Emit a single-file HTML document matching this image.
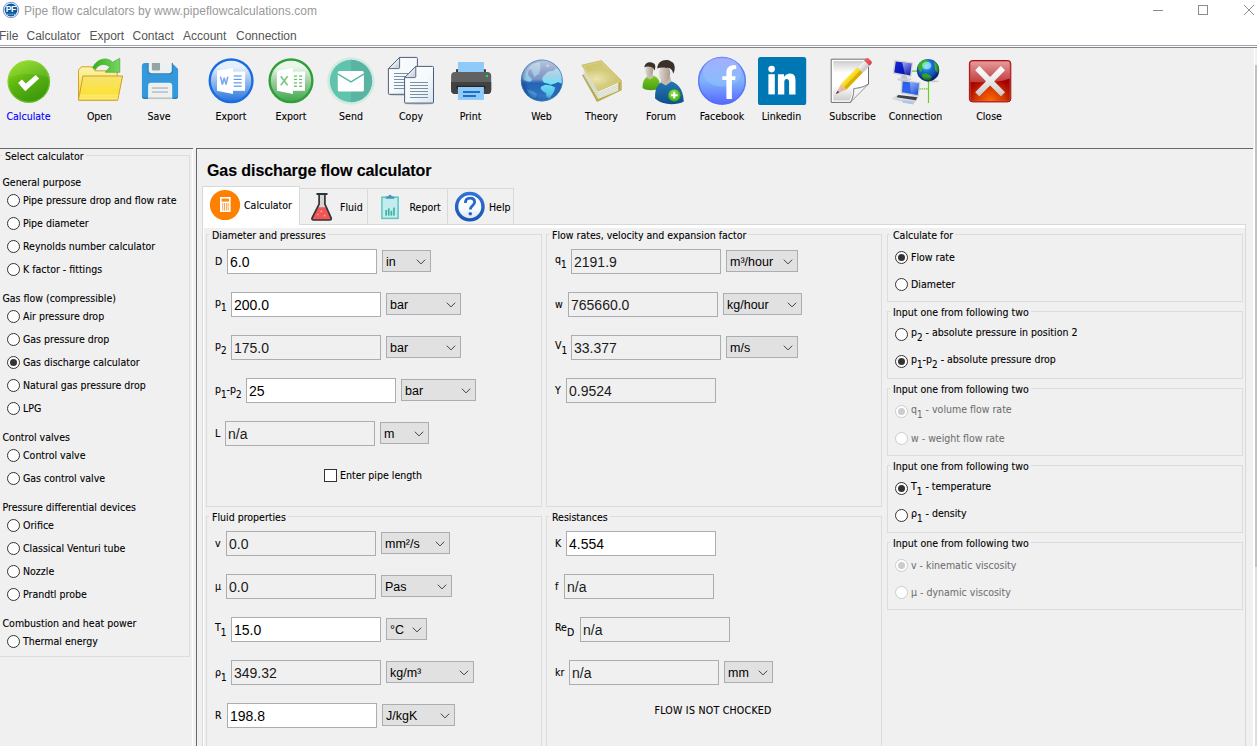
<!DOCTYPE html>
<html lang="en"><head><meta charset="utf-8"><title>Pipe flow calculators by www.pipeflowcalculations.com</title>
<style>
html,body{margin:0;padding:0}
body{width:1257px;height:746px;overflow:hidden;background:#f0f0f0;position:relative;font-family:"DejaVu Sans Condensed","DejaVu Sans","Liberation Sans",sans-serif;font-stretch:condensed;font-size:10.5px;color:#000;line-height:1;-webkit-text-stroke-width:.1px}
.a{position:absolute;white-space:nowrap}
.t{position:absolute;white-space:nowrap;line-height:14px;height:14px}
.titlebar{position:absolute;left:0;top:0;width:1257px;height:45px;background:#fff}
.title{-webkit-text-stroke-width:0;font:12px "Liberation Sans",sans-serif;color:#999;left:24px;top:4px;line-height:14px;letter-spacing:.055px}
.menu{-webkit-text-stroke-width:0;font:12px "Liberation Sans",sans-serif;color:#555;top:29px;line-height:14px}
.tl{position:absolute;top:109px;width:80px;text-align:center;line-height:14px}
.ic{position:absolute}
.inp{-webkit-text-stroke-width:0;position:absolute;box-sizing:border-box;height:25px;width:150px;border:1px solid #abadb3;background:#fff;font:14px "Liberation Sans",sans-serif;line-height:16px;padding:4px 0 0 2px;color:#000;white-space:nowrap}
.inp.d{background:#f0f0f0;color:#1a1a1a}
.sel{-webkit-text-stroke-width:0;position:absolute;box-sizing:border-box;height:22px;border:1px solid #acadb1;background:#e1e1e1;font:12.5px "Liberation Sans",sans-serif;line-height:14px;padding:4px 0 0 3px;white-space:nowrap}
.sel svg{position:absolute;right:4px;top:8px}
.gb{position:absolute;box-sizing:border-box;border:1px solid #dcdcdc}
.gl{position:absolute;background:#f0f0f0;line-height:14px;height:12px;padding:0 2px 0 3px;white-space:nowrap}
.gl span{position:relative;top:0}
.rd{position:absolute;width:13px;height:13px;box-sizing:border-box;border:1px solid #333;border-radius:50%;background:#fff}
.rd.on::after{content:"";position:absolute;left:2px;top:2px;width:7px;height:7px;border-radius:50%;background:#333}
.rd.dis{border-color:#cccccc;background:#fff}
.rd.dis.on::after{background:#cccccc}
.gray{color:#6f6f6f;-webkit-text-stroke-width:.05px}
sub{font-size:9.8px;vertical-align:baseline;position:relative;top:5px;line-height:0}
</style></head>
<body>
<div class="titlebar"></div>
<div class="ic" style="left:3px;top:2px;width:16px;height:16px"><svg width="18" height="18" viewBox="2 1 18 18" style="position:absolute;left:-1px;top:-1px"><circle cx="11" cy="10" r="7.7" fill="#fff" stroke="#6c80d2" stroke-width=".9"/><circle cx="11" cy="10" r="6.4" fill="#0b5a9e"/><text x="10.8" y="12.4" text-anchor="middle" font-family="Liberation Sans, sans-serif" font-weight="bold" font-size="8.6" fill="#fff" letter-spacing="-.5">PF</text><path d="M6.8 14.2H15.2" stroke="#fff" stroke-width=".8" stroke-dasharray="1 .8"/></svg></div>
<div class="a title">Pipe flow calculators by www.pipeflowcalculations.com</div>
<svg class="ic" style="left:1140px;top:0" width="117" height="24" viewBox="0 0 117 24"><g stroke="#8c8c8c" stroke-width="1" fill="none"><path d="M13 10.5h10"/><rect x="58.5" y="5.5" width="9" height="9"/><path d="M104 5l10 10M114 5l-10 10"/></g></svg>
<div class="a menu" style="left:-1px">File</div>
<div class="a menu" style="left:26.5px">Calculator</div>
<div class="a menu" style="left:89.5px">Export</div>
<div class="a menu" style="left:132.5px">Contact</div>
<div class="a menu" style="left:183px">Account</div>
<div class="a menu" style="left:236px">Connection</div>
<div class="a" style="left:0;top:45px;width:1257px;height:1px;background:#a0a0a0"></div>
<div class="a" style="left:0;top:46px;width:1257px;height:1px;background:#fff"></div>
<div class="a" style="left:0;top:47px;width:1257px;height:1px;background:#7d828c"></div>
<div class="ic" style="left:2px;top:55px;width:52px;height:52px"><svg width="52" height="52" viewBox="2 55 52 52"><defs><linearGradient id="gCalc" x1="0.25" y1="0" x2="0.75" y2="1"><stop offset="0" stop-color="#8edb14"/><stop offset=".45" stop-color="#5cb411"/><stop offset="1" stop-color="#36950b"/></linearGradient></defs><circle cx="28.8" cy="81.5" r="21.3" fill="url(#gCalc)"/><circle cx="28.8" cy="81.5" r="20.6" fill="none" stroke="#9be03a" stroke-opacity=".55" stroke-width="1"/><path d="M8.6 78.5A20.4 20.4 0 0 1 49 78.5C42 72.5 15 72.5 8.6 78.5Z" fill="#fff" fill-opacity=".10"/><polygon points="18.1,83 21.9,79.4 25.9,83.5 35.7,75 39.1,78.4 25.3,91.3" fill="#fff"/></svg></div><div class="tl" style="left:-11.5px;color:#0000ff">Calculate</div>
<div class="ic" style="left:73px;top:55px;width:52px;height:52px"><svg width="52" height="52" viewBox="73 55 52 52"><defs><linearGradient id="gOpA" x1="0" y1="0" x2="0" y2="1"><stop offset="0" stop-color="#fdf4a8"/><stop offset="1" stop-color="#f5d840"/></linearGradient><linearGradient id="gOpB" x1="0" y1="0" x2="0" y2="1"><stop offset="0" stop-color="#f6e36f"/><stop offset=".7" stop-color="#fce23a"/><stop offset="1" stop-color="#f7d936"/></linearGradient><linearGradient id="gOpC" x1="0" y1="0" x2="1" y2="0"><stop offset="0" stop-color="#36b018"/><stop offset="1" stop-color="#78d468"/></linearGradient></defs><path d="M78.5 100V70.2L81.3 66.8H92.3L95 70.8H117.2V77" fill="url(#gOpA)" stroke="#d1a032" stroke-width="1" stroke-linejoin="round"/><path d="M82.9 76H122.6L117.7 100.3H78.5Z" fill="url(#gOpB)" stroke="#cf9c2e" stroke-width="1" stroke-linejoin="round"/><path d="M79.6 95.2H118.4M79.3 97H118M79 98.7H117.8" stroke="#fdf1a0" stroke-width=".8" fill="none"/><path d="M92.8 67.6C96 59.5 106.5 55.8 112.6 62.2L119.8 58.2V72.3H105.4L109.6 67.2C106.5 63.2 98.5 63.4 95.6 69.6Z" fill="url(#gOpC)" stroke="#3aa61f" stroke-width=".6"/></svg></div><div class="tl" style="left:59.5px">Open</div>
<div class="ic" style="left:133px;top:55px;width:52px;height:52px"><svg width="52" height="52" viewBox="133 55 52 52"><path d="M145 62.9H172L178.1 69V96.1Q178.1 99.1 175.1 99.1H145Q141.9 99.1 141.9 96.1V66Q141.9 62.9 145 62.9Z" fill="#3498db"/><path d="M141.9 95.6V96.1Q141.9 99.1 145 99.1H175.1Q178.1 99.1 178.1 96.1V95.6Q178.1 97.4 175.1 97.4H145Q141.9 97.4 141.9 95.6Z" fill="#2980b9"/><path d="M147.6 62.9H172.9V71.2Q172.9 74.2 169.9 74.2H150.6Q147.6 74.2 147.6 71.2Z" fill="#2980b9"/><path d="M148.7 62.9H171.8V70.2Q171.8 73.2 168.8 73.2H151.7Q148.7 73.2 148.7 70.2Z" fill="#ecf0f1"/><path d="M151.9 62.9H160V69.2Q160 70.6 158.6 70.6H153.3Q151.9 70.6 151.9 69.2Z" fill="#95a5a6"/><path d="M148.1 99.1V85.8Q148.1 82.8 151.1 82.8H169.2Q172.2 82.8 172.2 85.8V99.1Z" fill="#ecf0f1"/><rect x="148.1" y="97.4" width="24.1" height="1.7" fill="#bdc3c7"/><rect x="151.9" y="87.2" width="16.1" height="1.7" fill="#bdc3c7"/><rect x="151.9" y="91.2" width="16.1" height="1.7" fill="#bdc3c7"/></svg></div><div class="tl" style="left:119px">Save</div>
<div class="ic" style="left:205px;top:55px;width:52px;height:52px"><svg width="52" height="52" viewBox="205 55 52 52"><defs><linearGradient id="gWord" x1="0" y1="0" x2="0" y2="1"><stop offset="0" stop-color="#e4effc"/><stop offset=".18" stop-color="#e4effc"/><stop offset=".55" stop-color="#8db6ee"/><stop offset="1" stop-color="#2471de"/></linearGradient></defs><circle cx="231.1" cy="80.8" r="21.35" fill="url(#gWord)" stroke="#1a6de0" stroke-width="2.4"/><path d="M233.0 71.6H245.1V90.8H233.0Z" fill="#fff"/><path d="M217.0 70.4L233.0 68V93.9L217.0 90.8Z" fill="#fff"/><path d="M220.5 76.6L222.4 84.6L224.2 77.6L226.0 84.6L227.79999999999998 76.6" fill="none" stroke="#7aacec" stroke-width="1.6" stroke-linejoin="miter"/><rect x="233.7" y="75.4" width="8" height="1.2" fill="#5a9cec"/><rect x="233.7" y="78.8" width="8" height="1.2" fill="#5a9cec"/><rect x="233.7" y="82.2" width="8" height="1.2" fill="#5a9cec"/><rect x="233.7" y="85.6" width="8" height="1.2" fill="#5a9cec"/></svg></div><div class="tl" style="left:191px">Export</div>
<div class="ic" style="left:265px;top:55px;width:52px;height:52px"><svg width="52" height="52" viewBox="265 55 52 52"><defs><linearGradient id="gExcel" x1="0" y1="0" x2="0" y2="1"><stop offset="0" stop-color="#e9f6ea"/><stop offset=".18" stop-color="#e9f6ea"/><stop offset=".55" stop-color="#93cc98"/><stop offset="1" stop-color="#3ca649"/></linearGradient></defs><circle cx="291" cy="80.8" r="21.35" fill="url(#gExcel)" stroke="#2f9e3b" stroke-width="2.4"/><path d="M292.9 71.6H305V90.8H292.9Z" fill="#fff"/><path d="M276.9 70.4L292.9 68V93.9L276.9 90.8Z" fill="#fff"/><path d="M280.8 76.2L287.6 85.2M287.6 76.2L280.8 85.2" fill="none" stroke="#7cc684" stroke-width="1.7"/><rect x="293.9" y="75.4" width="3.2" height="1.3" fill="#6cc074"/><rect x="299" y="75.4" width="3.2" height="1.3" fill="#6cc074"/><rect x="293.9" y="78.8" width="3.2" height="1.3" fill="#6cc074"/><rect x="299" y="78.8" width="3.2" height="1.3" fill="#6cc074"/><rect x="293.9" y="82.2" width="3.2" height="1.3" fill="#6cc074"/><rect x="299" y="82.2" width="3.2" height="1.3" fill="#6cc074"/><rect x="293.9" y="85.6" width="3.2" height="1.3" fill="#6cc074"/><rect x="299" y="85.6" width="3.2" height="1.3" fill="#6cc074"/></svg></div><div class="tl" style="left:251px">Export</div>
<div class="ic" style="left:325px;top:55px;width:52px;height:52px"><svg width="52" height="52" viewBox="325 55 52 52"><circle cx="351" cy="81" r="23.8" fill="#d3eae3"/><circle cx="351" cy="81" r="21.2" fill="#60c4ad"/><path d="M351 59.8A21.2 21.2 0 0 1 351 102.2Z" fill="#57b5a1"/><rect x="337.8" y="70.9" width="26.1" height="20.6" rx="1.6" fill="#fff"/><path d="M337.6 73.9L351 81.9L364.1 73.9" fill="none" stroke="#57b9a3" stroke-width="1.3"/></svg></div><div class="tl" style="left:311px">Send</div>
<div class="ic" style="left:385px;top:55px;width:52px;height:52px"><svg width="52" height="52" viewBox="385 55 52 52"><defs><linearGradient id="gCpP" x1="0" y1="0" x2="1" y2="1"><stop offset="0" stop-color="#ffffff"/><stop offset=".55" stop-color="#f4f9fc"/><stop offset="1" stop-color="#d6e6f2"/></linearGradient><linearGradient id="gCpF" x1="1" y1="1" x2="0.3" y2="0.3"><stop offset="0" stop-color="#b9c4d2"/><stop offset="1" stop-color="#ffffff"/></linearGradient></defs><ellipse cx="419" cy="103.6" rx="15" ry="1.3" fill="#000" fill-opacity=".13"/><ellipse cx="403" cy="94.8" rx="15" ry="1.2" fill="#000" fill-opacity=".12"/><path d="M399.59999999999997 57.4H416.4Q417.4 57.4 417.4 58.4V93.3Q417.4 94.3 416.4 94.3H389.4Q388.4 94.3 388.4 93.3V68.6Z" fill="url(#gCpP)" stroke="#4c5d7c" stroke-width="1"/><path d="M399.59999999999997 57.4V67.39999999999999Q399.59999999999997 68.6 398.4 68.6H388.4Z" fill="url(#gCpF)" stroke="#4c5d7c" stroke-width=".9" stroke-linejoin="round"/><rect x="394" y="73.0" width="18" height="1" fill="#7b8fa3"/><rect x="394" y="76.0" width="18" height="1" fill="#7b8fa3"/><rect x="394" y="79.0" width="18" height="1" fill="#7b8fa3"/><rect x="394" y="82.0" width="18" height="1" fill="#7b8fa3"/><rect x="394" y="85.0" width="18" height="1" fill="#7b8fa3"/><rect x="394" y="88.0" width="18" height="1" fill="#7b8fa3"/><path d="M415.8 66.4H432.5Q433.5 66.4 433.5 67.4V102.1Q433.5 103.1 432.5 103.1H405.6Q404.6 103.1 404.6 102.1V77.60000000000001Z" fill="url(#gCpP)" stroke="#4c5d7c" stroke-width="1"/><path d="M415.8 66.4V76.4Q415.8 77.60000000000001 414.6 77.60000000000001H404.6Z" fill="url(#gCpF)" stroke="#4c5d7c" stroke-width=".9" stroke-linejoin="round"/><rect x="410" y="82.0" width="18" height="1" fill="#7b8fa3"/><rect x="410" y="85.0" width="18" height="1" fill="#7b8fa3"/><rect x="410" y="88.0" width="18" height="1" fill="#7b8fa3"/><rect x="410" y="91.0" width="18" height="1" fill="#7b8fa3"/><rect x="410" y="94.0" width="18" height="1" fill="#7b8fa3"/><rect x="410" y="97.0" width="18" height="1" fill="#7b8fa3"/></svg></div><div class="tl" style="left:371px">Copy</div>
<div class="ic" style="left:444px;top:55px;width:52px;height:52px"><svg width="52" height="52" viewBox="444 55 52 52"><rect x="457.9" y="62" width="26" height="12" fill="#90caf9"/><rect x="456" y="69.2" width="2" height="3.5" fill="#3a3a3a"/><rect x="483.9" y="69.2" width="2" height="3.5" fill="#3a3a3a"/><path d="M455.1 71.9H487.2Q491.2 71.9 491.2 75.9V89.9Q491.2 93.9 487.2 93.9H455.1Q451.1 93.9 451.1 89.9V75.9Q451.1 71.9 455.1 71.9Z" fill="#616161"/><path d="M451.1 82H491.2V89.9Q491.2 93.9 487.2 93.9H455.1Q451.1 93.9 451.1 89.9Z" fill="#424242"/><rect x="456.2" y="85.8" width="29.4" height="3.2" rx="1.4" fill="#242424"/><rect x="457.9" y="87" width="26" height="12.9" fill="#90caf9"/><rect x="463" y="91.1" width="17" height="1.8" fill="#1565c0"/><rect x="463" y="95.1" width="13" height="1.8" fill="#1565c0"/><rect x="485.9" y="74.9" width="2.1" height="2.1" fill="#00e676"/></svg></div><div class="tl" style="left:430.5px">Print</div>
<div class="ic" style="left:515px;top:55px;width:52px;height:52px"><svg width="52" height="52" viewBox="515 55 52 52"><defs><linearGradient id="gWebA" x1="0" y1="0" x2="0" y2="1"><stop offset="0" stop-color="#bcc8de"/><stop offset=".3" stop-color="#8fa2ca"/><stop offset=".47" stop-color="#7c96c6"/><stop offset=".56" stop-color="#2463b6"/><stop offset=".8" stop-color="#2f6fbe"/><stop offset="1" stop-color="#3f8ad0"/></linearGradient><linearGradient id="gWebC" gradientUnits="userSpaceOnUse" x1="0" y1="59.6" x2="0" y2="101.4"><stop offset="0" stop-color="#d0dcec"/><stop offset=".4" stop-color="#a4d2ea"/><stop offset=".55" stop-color="#74e2f6"/><stop offset="1" stop-color="#44b4e0"/></linearGradient><radialGradient id="gWebD" cx=".55" cy=".45" r=".55"><stop offset="0" stop-color="#0a2c6c" stop-opacity="0"/><stop offset=".75" stop-color="#0a2c6c" stop-opacity="0"/><stop offset="1" stop-color="#0a2c6c" stop-opacity=".45"/></radialGradient><clipPath id="cWeb"><circle cx="541.8" cy="80.5" r="20.8"/></clipPath></defs><circle cx="541.8" cy="80.5" r="20.9" fill="url(#gWebA)"/><g clip-path="url(#cWeb)"><path d="M525.1 67.9 L532.0 63.4 L540.0 62.4 L540.5 68.6 L539.0 73.9 L536.9 74.9 L534.7 77.1 L533.1 74.2 L531.0 69.0 L528.2 70.7 L528.0 74.9 L532.4 79.9 L529.9 82.0 L523.7 79.9 L521.9 75.6Z" fill="url(#gWebC)" fill-opacity=".8"/><path d="M546.0 65.1 L548.8 64.5 L549.4 66.5 L547.0 67.2Z" fill="#d4dcea" fill-opacity=".8"/><path d="M542.5 77.3 L545.3 74.2 L548.2 71.6 L553.6 70.7 L556.1 67.9 L557.8 69.0 L560.6 71.4 L562.6 78.4 L562.1 84.1 L558.2 82.0 L555.0 83.4 L550.8 84.8 L546.7 83.3 L544.0 82.7 L542.3 79.9Z" fill="url(#gWebC)"/><path d="M540.9 86.8 L545.3 84.7 L550.8 85.5 L555.2 87.6 L553.8 91.8 L549.6 98.7 L546.8 97.3 L546.1 93.2 L542.6 91.1 L540.7 88.8Z" fill="url(#gWebC)"/><path d="M526.5 88.8 L529.2 90.1 L533.4 91.6 L537.0 93.9 L535.0 98.7 L531.5 97.3 L528.7 93.9Z" fill="#4a9edc" fill-opacity=".9"/><path d="M555.0 93.0 L557.8 87.4 L560.6 86.8 L559.6 93.0 L556.8 97.9 L554.0 98.6Z" fill="#2a66b4" fill-opacity=".55"/><circle cx="541.8" cy="80.5" r="20.9" fill="url(#gWebD)"/></g><circle cx="541.8" cy="80.5" r="20.5" fill="none" stroke="#3f84c4" stroke-opacity=".8" stroke-width=".9"/></svg></div><div class="tl" style="left:501.5px">Web</div>
<div class="ic" style="left:575px;top:55px;width:52px;height:52px"><svg width="52" height="52" viewBox="575 55 52 52"><defs><linearGradient id="gBook" x1="0" y1="0" x2=".75" y2="1"><stop offset="0" stop-color="#cdc26a"/><stop offset=".45" stop-color="#d4ca78"/><stop offset="1" stop-color="#c7bb60"/></linearGradient><linearGradient id="gBookS" x1="0" y1="0" x2="1" y2="0"><stop offset="0" stop-color="#a99c40"/><stop offset="1" stop-color="#d0c570"/></linearGradient><radialGradient id="gBookG" cx=".35" cy=".45" r=".6"><stop offset="0" stop-color="#f0ebbc" stop-opacity=".85"/><stop offset="1" stop-color="#d8cf84" stop-opacity=".25"/></radialGradient></defs><path d="M581.9 74.9 L584.5 74.3 L598.3 93.0 L621.6 81.9 L621.6 90.2 L597.0 102.1Z" fill="#b8ab4c"/><path d="M583.8 68.8 L598.3 91.3 L618.6 82.7 L618.6 90.4 L598.2 98.9 L584.2 75.3Z" fill="#f3f5ee"/><path d="M583.9 70.6 L598.2 93.0 L618.6 84.4M583.9 72.3 L598.2 94.7 L618.6 86.1M583.9 73.9 L598.2 96.4 L618.6 87.7M583.9 75.6 L598.2 98.0 L618.6 89.4" fill="none" stroke="#c6cbb8" stroke-width=".7"/><path d="M618.6 82.4 L621.6 80.8 L621.6 90.0 L618.6 90.8Z" fill="url(#gBookS)"/><path d="M581.9 65.1 L601.4 60.6 L621.6 80.8 L598.2 91.1Z" fill="url(#gBook)" stroke="#c2b65a" stroke-width=".7" stroke-linejoin="round"/><path d="M583.5 65.8 L601.1 61.8 L620.0 80.8 L598.6 89.7Z" fill="none" stroke="#e6dfa0" stroke-opacity=".7" stroke-width=".6" stroke-linejoin="round"/><path d="M584.2 74.2 L589.9 71.4 L605.3 70.4 L615.0 74.9 L620.0 80.8 L598.6 89.7Z" fill="url(#gBookG)"/></svg></div><div class="tl" style="left:561.5px">Theory</div>
<div class="ic" style="left:635px;top:55px;width:52px;height:52px"><svg width="52" height="52" viewBox="635 55 52 52"><defs><linearGradient id="gFoG" x1="0" y1="0" x2="0" y2="1"><stop offset="0" stop-color="#7ccc20"/><stop offset="1" stop-color="#4a9c10"/></linearGradient><linearGradient id="gFoB" x1="0" y1="0" x2="0" y2="1"><stop offset="0" stop-color="#2478b8"/><stop offset="1" stop-color="#0f4f88"/></linearGradient><linearGradient id="gFoS" x1="0" y1="0" x2="1" y2="0"><stop offset="0" stop-color="#e2d8ce"/><stop offset="1" stop-color="#a89a8e"/></linearGradient><radialGradient id="gFoP" cx=".4" cy=".3" r=".8"><stop offset="0" stop-color="#8ee04a"/><stop offset="1" stop-color="#3fa812"/></radialGradient></defs><path d="M642.6 88C642.2 80 646 76.2 651.5 75.6C657 76 660.4 80 660 88C656 91 646 91 642.6 88Z" fill="url(#gFoG)"/><path d="M646.6 77.5L650 79.4L653.5 77.3L652.8 74H647.2Z" fill="#c9bcb0"/><ellipse cx="649.2" cy="70.6" rx="4" ry="6" fill="url(#gFoS)"/><path d="M644.4 67.5C644.6 62.5 650 60.9 653.5 63.2C656 64.2 655.6 68.5 654.3 70.6C653.6 67.6 651.5 66.6 649.6 66.8C647.5 66.2 645.5 66.6 644.4 67.5Z" fill="#3b2f2a"/><path d="M655.1 98C654.6 86 660 81.4 666.5 80.6C677 81.4 683 88 683.8 101.4C676 105.6 662 105.2 655.1 98.6Z" fill="url(#gFoB)"/><path d="M660.6 82.4L665.8 85.4L671.4 81.6L670.2 77H661.4Z" fill="#c6b8ab"/><ellipse cx="664.6" cy="73.4" rx="5.6" ry="8.8" fill="url(#gFoS)"/><path d="M657.3 68.4C657.4 60.4 666 58.2 671 61.4C675.6 63 675.6 70 673.2 73.8C672.6 69.4 669.4 67.6 666.4 67.9C663 67 659.6 67.4 657.3 68.4Z" fill="#3b2f2a"/><circle cx="674.3" cy="95.2" r="6" fill="url(#gFoP)" stroke="#3c9a12" stroke-width=".6"/><path d="M674.3 91.8V98.6M670.9 95.2H677.7" stroke="#fff" stroke-width="1.9"/></svg></div><div class="tl" style="left:621px">Forum</div>
<div class="ic" style="left:696px;top:55px;width:52px;height:52px"><svg width="52" height="52" viewBox="696 55 52 52"><defs><linearGradient id="gFbA" x1="0" y1="0" x2="0" y2="1"><stop offset="0" stop-color="#93a4ff"/><stop offset=".5" stop-color="#7fb2fb"/><stop offset="1" stop-color="#5565ff"/></linearGradient><linearGradient id="gFbB" x1="0" y1="0" x2="0" y2="1"><stop offset="0" stop-color="#a9b4ff" stop-opacity=".7"/><stop offset="1" stop-color="#8ec4fc" stop-opacity=".55"/></linearGradient></defs><circle cx="722" cy="80.8" r="24" fill="url(#gFbA)"/><circle cx="722" cy="80.8" r="23.3" fill="none" stroke="#4f6bff" stroke-opacity=".75" stroke-width="1.4"/><ellipse cx="722" cy="72" rx="19.5" ry="14.5" fill="url(#gFbB)"/><path d="M726.4 99V80H722.3V76.3H726.4V72.6C726.4 67.6 729.6 65.2 733.6 65.2C735 65.2 736 65.4 736.2 65.5V69C733.4 68.6 731.9 69.3 731.9 72V76.3H735.6L735.2 80H731.9V99Z" fill="#fff"/></svg></div><div class="tl" style="left:682px">Facebook</div>
<div class="ic" style="left:755px;top:55px;width:52px;height:52px"><svg width="52" height="52" viewBox="755 55 52 52"><rect x="758" y="56.9" width="48.2" height="48.1" rx="2.6" fill="#0077b5"/><circle cx="771.6" cy="69.1" r="3.3" fill="#fff"/><rect x="768.4" y="74.2" width="6.4" height="20.2" fill="#fff"/><path d="M777.9 74.2H784V77C785.2 74.8 787.6 73.5 790 73.5C794.4 73.5 795.5 76.6 795.5 80.4V94.4H789.1V82C789.1 80.2 788.5 78.9 786.7 78.9C784.9 78.9 784.3 80.4 784.3 82V94.4H777.9Z" fill="#fff"/></svg></div><div class="tl" style="left:741.5px">Linkedin</div>
<div class="ic" style="left:826px;top:55px;width:52px;height:52px"><svg width="52" height="52" viewBox="826 55 52 52"><defs><linearGradient id="gSubA" x1="0" y1="0" x2="0" y2="1"><stop offset="0" stop-color="#cfcfcf"/><stop offset=".3" stop-color="#ffffff"/><stop offset=".62" stop-color="#ffffff"/><stop offset="1" stop-color="#cdcdcd"/></linearGradient><linearGradient id="gSubB" x1=".1" y1=".1" x2=".75" y2=".8"><stop offset="0" stop-color="#ffffff"/><stop offset=".5" stop-color="#f4f4f4"/><stop offset="1" stop-color="#b4b4b4"/></linearGradient><linearGradient id="gSubW" x1="0" y1="0" x2="1" y2="1"><stop offset="0" stop-color="#f3cdb4"/><stop offset="1" stop-color="#dca88a"/></linearGradient><linearGradient id="gSubD" x1="0" y1="0" x2="1" y2="1"><stop offset="0" stop-color="#b8b8b8"/><stop offset=".35" stop-color="#efefef"/><stop offset="1" stop-color="#a2a2a2"/></linearGradient><linearGradient id="gSubE" x1="0" y1="0" x2="1" y2="1"><stop offset="0" stop-color="#f06a6a"/><stop offset="1" stop-color="#d83a40"/></linearGradient></defs><path d="M831.2 59.2L868.5 59.2L868.5 84.0C863.6 87.4 858.8 88.3 853.9 88.6C853.9 93.0 853.2 98.6 850.4 102.4L831.2 102.4Z" fill="#fff" stroke="#6e6e6e" stroke-width="1" stroke-linejoin="round"/><path d="M833.3 61.1L867.0 61.1L867.0 83.3C862.2 86.2 857.4 86.9 852.5 87.2C852.5 93.0 851.9 97.2 849.6 100.6L833.3 100.6Z" fill="url(#gSubA)"/><path d="M868.5 84.0C863.6 87.4 858.8 88.3 853.9 88.6C853.9 93.0 853.2 98.6 850.4 102.4Z" fill="url(#gSubB)" stroke="#7c7c7c" stroke-width=".7" stroke-linejoin="round"/><path d="M835.8 94.1 L841.0 84.0 L846.6 89.5Z" fill="url(#gSubW)"/><path d="M835.8 94.1 L837.6 90.7 L839.4 92.5Z" fill="#4a4a4a"/><path d="M841.0 84.0 L857.4 67.2 L860.3 70.0 L843.9 86.9Z" fill="#f6d90c"/><path d="M843.9 86.9 L860.3 70.0 L862.9 72.5 L846.6 89.5Z" fill="#dcae00"/><path d="M841.9 84.1 L857.5 68.2 L858.2 68.8 L842.6 84.8Z" fill="#fbea6a"/><path d="M857.4 67.2 L864.0 60.6 L869.6 65.8 L862.9 72.5Z" fill="url(#gSubD)"/><path d="M864.0 60.6L866.1 58.5Q867.3 57.3 868.5 58.5L871.4 61.2Q872.6 62.5 871.4 63.8L869.6 65.8Z" fill="url(#gSubE)"/></svg></div><div class="tl" style="left:812.5px">Subscribe</div>
<div class="ic" style="left:889px;top:55px;width:52px;height:52px"><svg width="52" height="52" viewBox="889 55 52 52"><defs><linearGradient id="gCoM" x1="0" y1="0" x2="1" y2="1"><stop offset="0" stop-color="#1a2ad0"/><stop offset=".5" stop-color="#0a18c0"/><stop offset="1" stop-color="#0c1cb0"/></linearGradient><linearGradient id="gCoH" x1="0" y1="0" x2=".6" y2="1"><stop offset="0" stop-color="#ffffff" stop-opacity=".62"/><stop offset="1" stop-color="#ffffff" stop-opacity=".05"/></linearGradient><linearGradient id="gCoL" x1="0" y1="0" x2="1" y2="1"><stop offset="0" stop-color="#2a5ae6"/><stop offset=".5" stop-color="#2e66ee"/><stop offset="1" stop-color="#1644d0"/></linearGradient><linearGradient id="gCoS" x1="0" y1="0" x2="0" y2="1"><stop offset="0" stop-color="#eef0f3"/><stop offset="1" stop-color="#bcc0c8"/></linearGradient><radialGradient id="gCoG" cx=".42" cy=".3" r=".75"><stop offset="0" stop-color="#58ccff"/><stop offset=".38" stop-color="#1c6ad4"/><stop offset="1" stop-color="#0b2a88"/></radialGradient><radialGradient id="gCoGs" cx=".45" cy=".4" r=".56"><stop offset="0" stop-color="#021050" stop-opacity="0"/><stop offset=".7" stop-color="#021050" stop-opacity="0"/><stop offset="1" stop-color="#021050" stop-opacity=".55"/></radialGradient><clipPath id="cCoG"><circle cx="928" cy="70.2" r="11.2"/></clipPath></defs><path d="M912.0 71.1L917.3 71.1M928.5 81.5L928.5 103.1" stroke="#5fd21e" stroke-width="1.15" fill="none"/><path d="M919.3 88.8L928.2 88.8" stroke="#5fd21e" stroke-width="1.2" stroke-dasharray="1.5 .8" fill="none"/><ellipse cx="904.3" cy="78.9" rx="7.2" ry="2.3" fill="url(#gCoS)"/><path d="M901.5 74.9 L906.7 75.7 L907.4 79.1 L901.1 78.5Z" fill="#c3c6cc"/><path d="M894.7 60.4 L912.6 62.7 L910.9 76.6 L893.1 73.4Z" fill="#e6e4dc" stroke="#bcbcb4" stroke-width=".5"/><path d="M895.7 61.5 L911.7 63.5 L910.2 75.5 L894.2 72.5Z" fill="url(#gCoM)"/><path d="M902.2 62.4 L911.7 63.5 L910.2 75.5 L905.0 74.5Z" fill="url(#gCoH)"/><circle cx="928" cy="70.2" r="11.2" fill="url(#gCoG)"/><g clip-path="url(#cCoG)"><path d="M917.5 64.5 L920.7 61.3 L926.2 59.4 L929.4 62.2 L924.8 65.1 L922.8 69.0 L920.7 72.3 L918.2 69.0Z" fill="#35b028"/><path d="M921.5 74.6 L926.2 73.0 L931.8 76.4 L930.1 80.8 L924.8 80.3 L922.4 77.7Z" fill="#2ea524"/><path d="M933.9 61.3 L938.1 64.5 L939.6 70.0 L937.4 73.0 L935.3 70.4 L934.6 65.8Z" fill="#3db52c"/><ellipse cx="926.6" cy="65.5" rx="4.6" ry="3.8" fill="#b4f6ff" fill-opacity=".62"/><circle cx="928" cy="70.2" r="11.2" fill="url(#gCoGs)"/></g><ellipse cx="931.8" cy="81.3" rx="7" ry="1" fill="#000" fill-opacity=".16"/><path d="M896.6 95.1 L918.2 97.1 L913.0 104.3 L892.6 98.6Z" fill="url(#gCoS)" stroke="#b2b6be" stroke-width=".4"/><path d="M898.2 95.0 L917.3 97.3 L915.9 100.3 L896.4 97.3Z" fill="#3c414c"/><path d="M903.6 100.6 L912.4 102.1 L910.9 103.9 L902.2 102.4Z" fill="#a8c6ea"/><path d="M901.7 80.5 L920.0 82.4 L918.4 96.2 L901.1 93.0Z" fill="#cfd2d8" stroke="#b4b8c0" stroke-width=".4"/><path d="M902.7 81.5 L919.1 83.3 L917.7 95.1 L902.0 92.2Z" fill="url(#gCoL)"/><path d="M909.9 82.2 L919.1 83.3 L917.7 95.1 L910.9 93.9Z" fill="url(#gCoH)" fill-opacity=".7"/></svg></div><div class="tl" style="left:875.5px">Connection</div>
<div class="ic" style="left:963px;top:55px;width:52px;height:52px"><svg width="52" height="52" viewBox="963 55 52 52"><defs><linearGradient id="gClA" x1="0" y1="0" x2="0" y2="1"><stop offset="0" stop-color="#c41818"/><stop offset=".5" stop-color="#a20000"/><stop offset="1" stop-color="#b01c00"/></linearGradient><radialGradient id="gClC" cx=".5" cy="1" r=".68"><stop offset="0" stop-color="#ff6a00"/><stop offset=".55" stop-color="#d83c00" stop-opacity=".85"/><stop offset="1" stop-color="#a20000" stop-opacity="0"/></radialGradient><linearGradient id="gClB" x1="0" y1="0" x2="0" y2="1"><stop offset="0" stop-color="#e49a9a"/><stop offset="1" stop-color="#c23c3c"/></linearGradient><linearGradient id="gClX" x1="0" y1="0" x2="0" y2="1"><stop offset="0" stop-color="#ffffff"/><stop offset=".5" stop-color="#e9e9e9"/><stop offset="1" stop-color="#c9c9c9"/></linearGradient></defs><rect x="969.4" y="60.5" width="41.4" height="41.4" rx="3.2" fill="url(#gClA)" stroke="#a00808" stroke-width="1"/><rect x="970.4" y="61.5" width="39.4" height="39.4" rx="2.4" fill="url(#gClC)"/><path d="M970.4 63.9Q970.4 61.5 972.8 61.5H1007.4Q1009.8 61.5 1009.8 63.9V78.6C997 83.4 982 82.4 970.4 82Z" fill="url(#gClB)"/><rect x="970.2" y="61.3" width="39.8" height="39.8" rx="2.6" fill="none" stroke="#f0a0a0" stroke-opacity=".45" stroke-width=".7"/><path d="M979.3 66.1L990.1 76.9L1000.9 66.1L1005 70.2L994.2 81.2L1005 92.2L1000.9 96.3L990.1 85.5L979.3 96.3L975.2 92.2L986 81.2L975.2 70.2Z" fill="url(#gClX)"/></svg></div><div class="tl" style="left:949px">Close</div>
<div class="a" style="left:1254px;top:48px;width:1px;height:698px;background:#fff"></div><div class="a" style="left:1253px;top:148px;width:1px;height:598px;background:#fff"></div>
<div class="a" style="left:1255px;top:65px;width:2px;height:502px;background:#c1c1c1"></div>
<div class="a" style="left:1255px;top:567px;width:2px;height:179px;background:#dedede"></div>
<div class="a" style="left:0;top:148px;width:193px;height:1px;background:#696969"></div>
<div class="a" style="left:192px;top:149px;width:1px;height:597px;background:#fff"></div>
<div class="gb" style="left:-2px;top:155px;width:192px;height:502px"></div>
<div class="gl" style="left:2px;top:149px"><span>Select calculator</span></div>
<div class="t" style="left:2.5px;top:175px">General purpose</div>
<div class="rd" style="left:7px;top:194px"></div><div class="t" style="left:23px;top:193px">Pipe pressure drop and flow rate</div>
<div class="rd" style="left:7px;top:217px"></div><div class="t" style="left:23px;top:216px">Pipe diameter</div>
<div class="rd" style="left:7px;top:240px"></div><div class="t" style="left:23px;top:239px">Reynolds number calculator</div>
<div class="rd" style="left:7px;top:263px"></div><div class="t" style="left:23px;top:262px">K factor - fittings</div>
<div class="t" style="left:2.5px;top:291px">Gas flow (compressible)</div>
<div class="rd" style="left:7px;top:310px"></div><div class="t" style="left:23px;top:309px">Air pressure drop</div>
<div class="rd" style="left:7px;top:333px"></div><div class="t" style="left:23px;top:332px">Gas pressure drop</div>
<div class="rd on" style="left:7px;top:356px"></div><div class="t" style="left:23px;top:355px">Gas discharge calculator</div>
<div class="rd" style="left:7px;top:379px"></div><div class="t" style="left:23px;top:378px">Natural gas pressure drop</div>
<div class="rd" style="left:7px;top:402px"></div><div class="t" style="left:23px;top:401px">LPG</div>
<div class="t" style="left:2.5px;top:430px">Control valves</div>
<div class="rd" style="left:7px;top:449px"></div><div class="t" style="left:23px;top:448px">Control valve</div>
<div class="rd" style="left:7px;top:472px"></div><div class="t" style="left:23px;top:471px">Gas control valve</div>
<div class="t" style="left:2.5px;top:500px">Pressure differential devices</div>
<div class="rd" style="left:7px;top:519px"></div><div class="t" style="left:23px;top:518px">Orifice</div>
<div class="rd" style="left:7px;top:542px"></div><div class="t" style="left:23px;top:541px">Classical Venturi tube</div>
<div class="rd" style="left:7px;top:565px"></div><div class="t" style="left:23px;top:564px">Nozzle</div>
<div class="rd" style="left:7px;top:588px"></div><div class="t" style="left:23px;top:587px">Prandtl probe</div>
<div class="t" style="left:2.5px;top:616px">Combustion and heat power</div>
<div class="rd" style="left:7px;top:635px"></div><div class="t" style="left:23px;top:634px">Thermal energy</div>
<div class="a" style="left:196px;top:148px;width:1057px;height:1px;background:#696969"></div>
<div class="a" style="left:196px;top:148px;width:1px;height:598px;background:#696969"></div>
<div class="a" style="left:207px;top:161px;font:bold 16px 'Liberation Sans',sans-serif;line-height:20px;letter-spacing:-0.08px">Gas discharge flow calculator</div>
<div class="a" style="left:202px;top:224px;width:1044px;height:530px;box-sizing:border-box;border:1px solid #d9d9d9;background:#fff"></div>
<div class="a" style="left:204px;top:228px;width:1041px;height:530px;background:#f0f0f0"></div>
<div class="a" style="left:299px;top:188px;width:69px;height:37px;box-sizing:border-box;border:1px solid #d9d9d9;background:#f0f0f0"></div><div class="t" style="left:340px;top:200px">Fluid</div>
<div class="a" style="left:367px;top:188px;width:81px;height:37px;box-sizing:border-box;border:1px solid #d9d9d9;background:#f0f0f0"></div><div class="t" style="left:409.5px;top:200px">Report</div>
<div class="a" style="left:447px;top:188px;width:67px;height:37px;box-sizing:border-box;border:1px solid #d9d9d9;background:#f0f0f0"></div><div class="t" style="left:489px;top:200px">Help</div>
<div class="a" style="left:202px;top:186px;width:98px;height:39px;box-sizing:border-box;border:1px solid #d9d9d9;border-bottom:none;background:#fff"></div><div class="a" style="left:203px;top:224px;width:96px;height:4px;background:#fff"></div><div class="t" style="left:244px;top:198px">Calculator</div>
<div class="ic" style="left:209px;top:189px;width:32px;height:32px"><svg width="32" height="32" viewBox="209 189 32 32"><circle cx="225" cy="205" r="15.1" fill="#ff7f00"/><rect x="220" y="197" width="10.6" height="15" fill="#fff"/><rect x="221.6" y="198.6" width="7.4" height="3" fill="#ff8a1a"/><rect x="222.3" y="203" width=".9" height="7.6" fill="#ff9a3c"/><rect x="224.1" y="203" width=".9" height="7.6" fill="#ff9a3c"/><rect x="225.9" y="203" width=".9" height="7.6" fill="#ff9a3c"/><rect x="227.7" y="203" width=".9" height="7.6" fill="#ff9a3c"/></svg></div>
<div class="ic" style="left:305px;top:191px;width:30px;height:32px"><svg width="30" height="32" viewBox="305 191 30 32"><path d="M319.1 194.4V204.2L312.2 217.6Q311.2 220 313.6 220H329.6Q332 220 331 217.6L324.9 204.2V194.4Z" fill="#d4d4d4"/><path d="M318.3 207.2H326L331 217.6Q332 220 329.6 220H313.6Q311.2 220 312.2 217.6Z" fill="#f25555"/><path d="M319.1 194.4V204.2L312.2 217.6Q311.2 220 313.6 220H329.6Q332 220 331 217.6L324.9 204.2V194.4" fill="none" stroke="#323232" stroke-width="1.7" stroke-linejoin="round"/><path d="M317.2 194H326.8" stroke="#323232" stroke-width="1.9" stroke-linecap="round"/><circle cx="321.4" cy="211.4" r=".9" fill="#f9a8a8"/><circle cx="324.6" cy="215.6" r=".9" fill="#f9a8a8"/><circle cx="318" cy="214.6" r=".8" fill="#f9a8a8"/></svg></div>
<div class="ic" style="left:378px;top:193px;width:24px;height:28px"><svg width="24" height="28" viewBox="378 193 24 28"><rect x="381.9" y="197.2" width="16.2" height="21.2" fill="#c3ecee" stroke="#5cc6bd" stroke-width="1.5"/><path d="M385.8 198.8V196.6H388.2Q388.4 194.8 390 194.8Q391.6 194.8 391.8 196.6H394.2V198.8Z" fill="#4b92c4"/><rect x="385.3" y="210" width="1.7" height="5.6" fill="#3db3a4"/><rect x="387.9" y="208.4" width="1.7" height="7.2" fill="#3db3a4"/><rect x="390.5" y="210.8" width="1.7" height="4.8" fill="#3db3a4"/><rect x="393.1" y="207.6" width="1.7" height="8" fill="#3db3a4"/></svg></div>
<div class="ic" style="left:454px;top:190px;width:32px;height:32px"><svg width="32" height="32" viewBox="454 190 32 32"><defs><linearGradient id="gHelp" x1="0" y1="0" x2="0" y2="1"><stop offset="0" stop-color="#ffffff"/><stop offset=".6" stop-color="#f6f9fd"/><stop offset="1" stop-color="#d6e2f2"/></linearGradient><linearGradient id="gHelpR" x1="0" y1="0" x2="0" y2="1"><stop offset="0" stop-color="#2f72d6"/><stop offset="1" stop-color="#1a56b4"/></linearGradient></defs><circle cx="469.8" cy="206.7" r="13.2" fill="url(#gHelp)" stroke="url(#gHelpR)" stroke-width="3.4"/><path d="M465.4 203C465.4 199.6 467.4 198.2 470 198.2C472.8 198.2 474.6 199.8 474.6 202.2C474.6 205.4 470.3 205.6 470.3 209.6" fill="none" stroke="#2667cc" stroke-width="2.8"/><circle cx="470.3" cy="213.8" r="1.8" fill="#2667cc"/></svg></div>
<div class="gb" style="left:206px;top:234px;width:336px;height:273px"></div><div class="gl" style="left:209px;top:228px"><span>Diameter and pressures</span></div>
<div class="gb" style="left:546px;top:234px;width:336px;height:273px"></div><div class="gl" style="left:549px;top:228px"><span>Flow rates, velocity and expansion factor</span></div>
<div class="gb" style="left:206px;top:516px;width:336px;height:285px"></div><div class="gl" style="left:209px;top:510px"><span>Fluid properties</span></div>
<div class="gb" style="left:546px;top:516px;width:336px;height:285px"></div><div class="gl" style="left:549px;top:510px"><span>Resistances</span></div>
<div class="t" style="left:215px;top:254px">D</div><div class="inp" style="left:227px;top:249px">6.0</div><div class="sel" style="left:382px;top:250px;width:49px">in<svg width="10" height="6" viewBox="0 0 10 6"><path d="M0.8 0.7L5 4.9L9.2 0.7" fill="none" stroke="#404040" stroke-width="1"/></svg></div>
<div class="t" style="left:215px;top:295px">p<sub>1</sub></div><div class="inp" style="left:231px;top:292px">200.0</div><div class="sel" style="left:386px;top:293px;width:75px">bar<svg width="10" height="6" viewBox="0 0 10 6"><path d="M0.8 0.7L5 4.9L9.2 0.7" fill="none" stroke="#404040" stroke-width="1"/></svg></div>
<div class="t" style="left:215px;top:338px">p<sub>2</sub></div><div class="inp d" style="left:231px;top:335px">175.0</div><div class="sel" style="left:386px;top:336px;width:75px">bar<svg width="10" height="6" viewBox="0 0 10 6"><path d="M0.8 0.7L5 4.9L9.2 0.7" fill="none" stroke="#404040" stroke-width="1"/></svg></div>
<div class="t" style="left:215px;top:382px">p<sub>1</sub>-p<sub>2</sub></div><div class="inp" style="left:246px;top:378px">25</div><div class="sel" style="left:401px;top:379px;width:75px">bar<svg width="10" height="6" viewBox="0 0 10 6"><path d="M0.8 0.7L5 4.9L9.2 0.7" fill="none" stroke="#404040" stroke-width="1"/></svg></div>
<div class="t" style="left:215px;top:426px">L</div><div class="inp d" style="left:225px;top:421px">n/a</div><div class="sel" style="left:380px;top:422px;width:49px">m<svg width="10" height="6" viewBox="0 0 10 6"><path d="M0.8 0.7L5 4.9L9.2 0.7" fill="none" stroke="#404040" stroke-width="1"/></svg></div>
<div class="a" style="left:324px;top:469px;width:13px;height:13px;box-sizing:border-box;border:1px solid #333;background:#fff"></div><div class="t" style="left:340px;top:468px">Enter pipe length</div><div class="t" style="left:555px;top:252px">q<sub>1</sub></div><div class="inp d" style="left:571px;top:249px">2191.9</div><div class="sel" style="left:726px;top:250px;width:72px">m³/hour<svg width="10" height="6" viewBox="0 0 10 6"><path d="M0.8 0.7L5 4.9L9.2 0.7" fill="none" stroke="#404040" stroke-width="1"/></svg></div>
<div class="t" style="left:555px;top:297px">w</div><div class="inp d" style="left:568px;top:292px">765660.0</div><div class="sel" style="left:723px;top:293px;width:79px">kg/hour<svg width="10" height="6" viewBox="0 0 10 6"><path d="M0.8 0.7L5 4.9L9.2 0.7" fill="none" stroke="#404040" stroke-width="1"/></svg></div>
<div class="t" style="left:555px;top:338px">V<sub>1</sub></div><div class="inp d" style="left:571px;top:335px">33.377</div><div class="sel" style="left:726px;top:336px;width:72px">m/s<svg width="10" height="6" viewBox="0 0 10 6"><path d="M0.8 0.7L5 4.9L9.2 0.7" fill="none" stroke="#404040" stroke-width="1"/></svg></div>
<div class="t" style="left:555px;top:383px">Y</div><div class="inp d" style="left:566px;top:378px">0.9524</div><div class="t" style="left:215px;top:536px">v</div><div class="inp d" style="left:226px;top:531px">0.0</div><div class="sel" style="left:381px;top:532px;width:69px">mm²/s<svg width="10" height="6" viewBox="0 0 10 6"><path d="M0.8 0.7L5 4.9L9.2 0.7" fill="none" stroke="#404040" stroke-width="1"/></svg></div>
<div class="t" style="left:215px;top:579px">µ</div><div class="inp d" style="left:226px;top:574px">0.0</div><div class="sel" style="left:381px;top:575px;width:71px">Pas<svg width="10" height="6" viewBox="0 0 10 6"><path d="M0.8 0.7L5 4.9L9.2 0.7" fill="none" stroke="#404040" stroke-width="1"/></svg></div>
<div class="t" style="left:215px;top:620px">T<sub>1</sub></div><div class="inp" style="left:231px;top:617px">15.0</div><div class="sel" style="left:386px;top:618px;width:41px">°C<svg width="10" height="6" viewBox="0 0 10 6"><path d="M0.8 0.7L5 4.9L9.2 0.7" fill="none" stroke="#404040" stroke-width="1"/></svg></div>
<div class="t" style="left:215px;top:665px">ρ<sub>1</sub></div><div class="inp d" style="left:231px;top:660px">349.32</div><div class="sel" style="left:386px;top:661px;width:88px">kg/m³<svg width="10" height="6" viewBox="0 0 10 6"><path d="M0.8 0.7L5 4.9L9.2 0.7" fill="none" stroke="#404040" stroke-width="1"/></svg></div>
<div class="t" style="left:215px;top:708px">R</div><div class="inp" style="left:227px;top:703px">198.8</div><div class="sel" style="left:382px;top:704px;width:73px">J/kgK<svg width="10" height="6" viewBox="0 0 10 6"><path d="M0.8 0.7L5 4.9L9.2 0.7" fill="none" stroke="#404040" stroke-width="1"/></svg></div>
<div class="t" style="left:555px;top:536px">K</div><div class="inp" style="left:566px;top:531px">4.554</div><div class="t" style="left:555px;top:579px">f</div><div class="inp d" style="left:564px;top:574px">n/a</div><div class="t" style="left:555px;top:620px">Re<sub style="font-size:10.5px">D</sub></div><div class="inp d" style="left:580px;top:617px">n/a</div><div class="t" style="left:555px;top:665px">kr</div><div class="inp d" style="left:569px;top:660px">n/a</div><div class="sel" style="left:724px;top:661px;width:49px">mm<svg width="10" height="6" viewBox="0 0 10 6"><path d="M0.8 0.7L5 4.9L9.2 0.7" fill="none" stroke="#404040" stroke-width="1"/></svg></div>
<div class="t" style="left:654.5px;top:703px"><span style="letter-spacing:.25px">FLOW IS NOT CHOCKED</span></div><div class="gb" style="left:887px;top:234px;width:356px;height:68px"></div><div class="gl" style="left:890px;top:228px"><span>Calculate for</span></div>
<div class="rd on" style="left:895px;top:251px"></div><div class="t" style="left:911px;top:250px">Flow rate</div>
<div class="rd" style="left:895px;top:278px"></div><div class="t" style="left:911px;top:277px">Diameter</div>
<div class="gb" style="left:887px;top:311px;width:356px;height:68px"></div><div class="gl" style="left:890px;top:305px"><span>Input one from following two</span></div>
<div class="rd" style="left:895px;top:328px"></div><div class="t" style="left:911px;top:325px">p<sub>2</sub> - absolute pressure in position 2</div>
<div class="rd on" style="left:895px;top:355px"></div><div class="t" style="left:911px;top:352px">p<sub>1</sub>-p<sub>2</sub> - absolute pressure drop</div>
<div class="gb" style="left:887px;top:388px;width:356px;height:68px"></div><div class="gl" style="left:890px;top:382px"><span>Input one from following two</span></div>
<div class="rd on dis" style="left:895px;top:405px"></div><div class="t gray" style="left:911px;top:402px">q<sub>1</sub> - volume flow rate</div>
<div class="rd dis" style="left:895px;top:432px"></div><div class="t gray" style="left:911px;top:431px">w - weight flow rate</div>
<div class="gb" style="left:887px;top:465px;width:356px;height:68px"></div><div class="gl" style="left:890px;top:459px"><span>Input one from following two</span></div>
<div class="rd on" style="left:895px;top:482px"></div><div class="t" style="left:911px;top:479px">T<sub>1</sub> - temperature</div>
<div class="rd" style="left:895px;top:509px"></div><div class="t" style="left:911px;top:506px">ρ<sub>1</sub> - density</div>
<div class="gb" style="left:887px;top:542px;width:356px;height:68px"></div><div class="gl" style="left:890px;top:536px"><span>Input one from following two</span></div>
<div class="rd on dis" style="left:895px;top:559px"></div><div class="t gray" style="left:911px;top:558px">v - kinematic viscosity</div>
<div class="rd dis" style="left:895px;top:586px"></div><div class="t gray" style="left:911px;top:585px">µ - dynamic viscosity</div>
</body></html>
